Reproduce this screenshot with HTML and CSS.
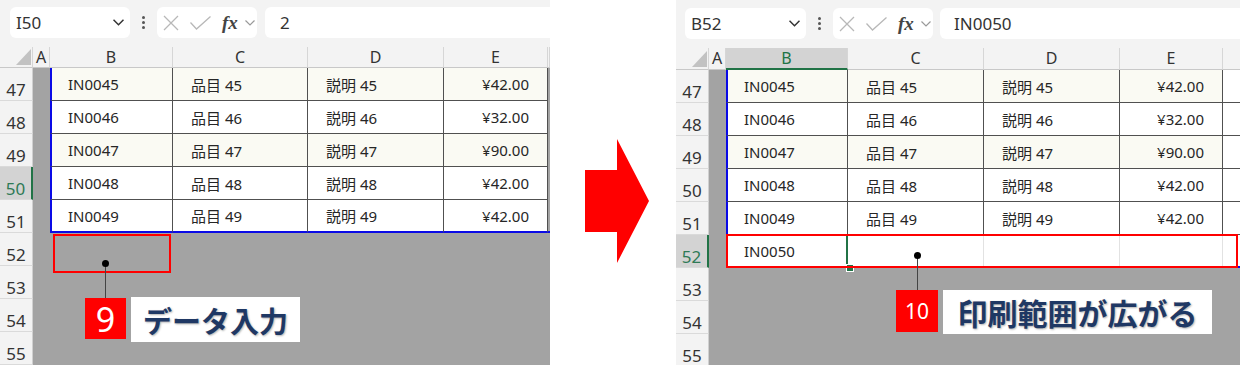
FILE: index.html
```html
<!DOCTYPE html>
<html lang="ja">
<head>
  <meta charset="UTF-8">
  <title>印刷範囲が広がる</title>
  <link rel="stylesheet" href="styles.css">
</head>
<body>
  <div class="stage">

    <section class="panel panel-before">
      <div class="toolbar">
        <div class="namebox">
          <span>I50</span>
          <svg class="caret" width="11" height="7" viewBox="0 0 11 7"><polyline points="0.5,0.8 5.5,5.8 10.5,0.8"/></svg>
        </div>
        <div class="kebab"><i></i><i></i><i></i></div>
        <div class="fx-group">
          <svg class="ico-x" width="16" height="16" viewBox="0 0 16 16"><path d="M1 1 L15 15 M15 1 L1 15"/></svg>
          <svg class="ico-ok" width="21" height="14" viewBox="0 0 21 14"><polyline points="0.5,6.5 6.5,13 20.5,0.5"/></svg>
          <span class="fx">fx</span>
          <svg class="caret-sm" width="10" height="6" viewBox="0 0 10 6"><polyline points="0.5,0.5 5,5 9.5,0.5"/></svg>
        </div>
        <div class="formula">2</div>
      </div>

      <div class="sheet">
        <div class="corner"><div class="tri"></div></div>
        <div class="hdr">A</div><div class="hdr">B</div><div class="hdr">C</div><div class="hdr">D</div><div class="hdr">E</div><div class="hdr"></div>

        <div class="rh">47</div><div class="pad"></div>
        <div class="cell lead alt">IN0045</div><div class="cell alt">品目 45</div><div class="cell alt">説明 45</div><div class="cell money alt">¥42.00</div><div class="pad"></div>

        <div class="rh">48</div><div class="pad"></div>
        <div class="cell lead">IN0046</div><div class="cell">品目 46</div><div class="cell">説明 46</div><div class="cell money">¥32.00</div><div class="pad"></div>

        <div class="rh">49</div><div class="pad"></div>
        <div class="cell lead alt">IN0047</div><div class="cell alt">品目 47</div><div class="cell alt">説明 47</div><div class="cell money alt">¥90.00</div><div class="pad"></div>

        <div class="rh sel">50</div><div class="pad"></div>
        <div class="cell lead">IN0048</div><div class="cell">品目 48</div><div class="cell">説明 48</div><div class="cell money">¥42.00</div><div class="pad"></div>

        <div class="rh">51</div><div class="pad"></div>
        <div class="cell lead edge">IN0049</div><div class="cell edge">品目 49</div><div class="cell edge">説明 49</div><div class="cell money edge">¥42.00</div><div class="pad edge"></div>

        <div class="rh">52</div><div class="void"></div>
        <div class="rh">53</div><div class="void"></div>
        <div class="rh">54</div><div class="void"></div>
        <div class="rh">55</div><div class="void"></div>
      </div>

      <div class="mark mark-before"></div>
      <div class="leader leader-before"></div>
      <div class="callout callout-before">
        <div class="badge badge-big">9</div>
        <div class="label">データ入力</div>
      </div>
    </section>

    <div class="arrow">
      <svg width="64" height="124" viewBox="0 0 64 124"><polygon points="0,31 32,31 32,0 64,62 32,124 32,93 0,93"/></svg>
    </div>

    <section class="panel panel-after">
      <div class="toolbar">
        <div class="namebox">
          <span>B52</span>
          <svg class="caret" width="11" height="7" viewBox="0 0 11 7"><polyline points="0.5,0.8 5.5,5.8 10.5,0.8"/></svg>
        </div>
        <div class="kebab"><i></i><i></i><i></i></div>
        <div class="fx-group">
          <svg class="ico-x" width="16" height="16" viewBox="0 0 16 16"><path d="M1 1 L15 15 M15 1 L1 15"/></svg>
          <svg class="ico-ok" width="21" height="14" viewBox="0 0 21 14"><polyline points="0.5,6.5 6.5,13 20.5,0.5"/></svg>
          <span class="fx">fx</span>
          <svg class="caret-sm" width="10" height="6" viewBox="0 0 10 6"><polyline points="0.5,0.5 5,5 9.5,0.5"/></svg>
        </div>
        <div class="formula">IN0050</div>
      </div>

      <div class="sheet">
        <div class="corner"><div class="tri"></div></div>
        <div class="hdr">A</div><div class="hdr sel">B</div><div class="hdr">C</div><div class="hdr">D</div><div class="hdr">E</div><div class="hdr"></div>

        <div class="rh">47</div><div class="pad"></div>
        <div class="cell lead alt">IN0045</div><div class="cell alt">品目 45</div><div class="cell alt">説明 45</div><div class="cell money alt">¥42.00</div><div class="cell spare"></div>

        <div class="rh">48</div><div class="pad"></div>
        <div class="cell lead">IN0046</div><div class="cell">品目 46</div><div class="cell">説明 46</div><div class="cell money">¥32.00</div><div class="cell spare"></div>

        <div class="rh">49</div><div class="pad"></div>
        <div class="cell lead alt">IN0047</div><div class="cell alt">品目 47</div><div class="cell alt">説明 47</div><div class="cell money alt">¥90.00</div><div class="cell spare"></div>

        <div class="rh">50</div><div class="pad"></div>
        <div class="cell lead">IN0048</div><div class="cell">品目 48</div><div class="cell">説明 48</div><div class="cell money">¥42.00</div><div class="cell spare"></div>

        <div class="rh">51</div><div class="pad"></div>
        <div class="cell lead">IN0049</div><div class="cell">品目 49</div><div class="cell">説明 49</div><div class="cell money">¥42.00</div><div class="cell spare"></div>

        <div class="rh sel">52</div><div class="pad"></div>
        <div class="cell lead edge active">IN0050</div><div class="cell open edge"></div><div class="cell open edge"></div><div class="cell open edge"></div><div class="cell spare open edge"></div>

        <div class="rh">53</div><div class="void"></div>
        <div class="rh">54</div><div class="void"></div>
        <div class="rh">55</div><div class="void"></div>
      </div>

      <div class="handle"></div>
      <div class="mark mark-after"></div>
      <div class="leader leader-after"></div>
      <div class="callout callout-after">
        <div class="badge">10</div>
        <div class="label">印刷範囲が広がる</div>
      </div>
    </section>

  </div>
</body>
</html>
```

FILE: styles.css
```css
body {
  margin: 0;
  background-color: #ffffff;
  font-family: "Noto Sans", "Noto Sans CJK JP", sans-serif;
  color: #262626;
}
.stage {
  display: flex;
  height: 365px;
  overflow: hidden;
}

/* panels */
.panel {
  position: relative;
  width: 550px;
  height: 365px;
  overflow: hidden;
  background-color: #a3a3a3;
  flex-shrink: 0;
}
.panel-after {
  width: 564px;
}

/* formula bar */
.toolbar {
  height: 47px;
  box-sizing: border-box;
  padding: 7px 0 0 10px;
  background-color: #f3f3f3;
  display: flex;
  align-items: flex-start;
}
.panel-after .toolbar {
  height: 48px;
  padding: 8px 0 0 9px;
}
.namebox {
  width: 120px;
  height: 31px;
  box-sizing: border-box;
  padding: 0 6px;
  background-color: #ffffff;
  border-radius: 6px;
  display: flex;
  align-items: center;
  justify-content: space-between;
  font-size: 17px;
  color: #333333;
}
.panel-after .namebox {
  width: 121px;
}
.caret polyline {
  fill: none;
  stroke: #333333;
  stroke-width: 1.5;
}
.kebab {
  width: 27px;
  height: 31px;
  display: flex;
  flex-direction: column;
  align-items: center;
  justify-content: center;
  gap: 2px;
}
.kebab i {
  width: 3px;
  height: 3px;
  border-radius: 50%;
  background-color: #555555;
}
.fx-group {
  width: 100px;
  height: 31px;
  box-sizing: border-box;
  padding-left: 6px;
  background-color: #ffffff;
  border-radius: 6px;
  display: flex;
  align-items: center;
}
.ico-x path,
.ico-ok polyline {
  fill: none;
  stroke: #b8b8b8;
  stroke-width: 1.3;
}
.ico-ok {
  margin-left: 11px;
}
.fx {
  margin-left: 11px;
  font-family: "Liberation Serif", serif;
  font-style: italic;
  font-weight: bold;
  font-size: 19px;
  color: #444444;
}
.caret-sm {
  margin-left: 7px;
}
.caret-sm polyline {
  fill: none;
  stroke: #9a9a9a;
  stroke-width: 1.2;
}
.formula {
  flex: 1;
  height: 31px;
  margin-left: 8px;
  padding-left: 15px;
  background-color: #ffffff;
  border-radius: 6px 0 0 6px;
  display: flex;
  align-items: center;
  font-size: 17px;
  color: #333333;
}
.panel-after .formula {
  margin-left: 7px;
  padding-left: 14px;
}

/* grid */
.sheet {
  display: grid;
  grid-template-columns: 33px 17px 123px 135px 136px 104px 1fr;
  grid-template-rows: 21px;
  grid-auto-rows: 33px;
}
.panel-after .sheet {
  grid-template-columns: 33px 17px 122px 136px 136px 103px 1fr;
  grid-template-rows: 22px;
}
.corner {
  background-color: #f3f3f3;
  border-bottom: 1px solid #c8c8c8;
  border-right: 1px solid #d6d6d6;
  display: flex;
  align-items: flex-end;
  justify-content: flex-end;
  padding: 0 1px 2px 0;
}
.tri {
  width: 15px;
  height: 16px;
  background-color: #c2c2c2;
  clip-path: polygon(100% 0, 100% 100%, 0 100%);
}
.hdr {
  background-color: #f3f3f3;
  border-right: 1px solid #d6d6d6;
  border-bottom: 1px solid #c8c8c8;
  font-size: 16px;
  line-height: 21px;
  text-align: center;
  color: #333333;
}
.hdr.sel {
  background-color: #d3d3d3;
  color: #217346;
  border-bottom: 2px solid #217346;
}
.rh {
  background-color: #f3f3f3;
  border-bottom: 1px solid #dadada;
  border-right: 1px solid #d0d0d0;
  display: flex;
  align-items: flex-end;
  justify-content: center;
  padding-bottom: 2px;
  font-size: 17px;
  line-height: 17px;
  color: #333333;
}
.rh.sel {
  background-color: #d3d3d3;
  color: #2f7a56;
  border-right: 2px solid #217346;
}
.cell {
  background-color: #ffffff;
  border-right: 1px solid #505050;
  border-bottom: 1px solid #505050;
  padding-left: 18px;
  display: flex;
  align-items: center;
  font-size: 15px;
  color: #262626;
  white-space: nowrap;
}
.cell.alt {
  background-color: #fafaf3;
}
.cell.lead {
  border-left: 2px solid #0a0ae6;
  padding-left: 16px;
}
.cell.money {
  justify-content: flex-end;
  padding: 0 18px 0 0;
}
.cell.spare {
  border-right: none;
}
.cell.open {
  border-right: 1px solid #e2e2e2;
}
.cell.active {
  border-right: 2px solid #217346;
}
.edge {
  border-bottom: 2px solid #0a0ae6;
}
.void {
  grid-column: 2 / -1;
}

/* annotations */
.mark {
  position: absolute;
  border: 2px solid #ff0000;
  box-sizing: border-box;
}
.mark-before {
  left: 53px;
  top: 234px;
  width: 118px;
  height: 39px;
}
.mark-after {
  left: 50px;
  top: 234px;
  width: 512px;
  height: 34px;
}
.handle {
  position: absolute;
  left: 170px;
  top: 264px;
  width: 6px;
  height: 6px;
  background-color: #217346;
  border: 1px solid #ffffff;
}
.leader {
  position: absolute;
  width: 1px;
  background-color: #444444;
}
.leader::before {
  content: "";
  position: absolute;
  left: -3px;
  top: -3px;
  width: 7px;
  height: 7px;
  border-radius: 50%;
  background-color: #000000;
}
.leader-before {
  left: 105px;
  top: 263px;
  height: 35px;
}
.leader-after {
  left: 241px;
  top: 255px;
  height: 35px;
}
.callout {
  position: absolute;
  display: flex;
  align-items: flex-start;
  gap: 5px;
}
.callout-before {
  left: 85px;
  top: 297px;
}
.callout-after {
  left: 220px;
  top: 290px;
}
.badge {
  width: 42px;
  height: 42px;
  background-color: #ff0000;
  color: #ffffff;
  display: flex;
  align-items: center;
  justify-content: center;
  font-size: 21px;
}
.badge-big {
  width: 41px;
  height: 41px;
  margin-top: 1px;
  font-size: 34px;
}
.label {
  height: 44px;
  box-sizing: border-box;
  background-color: #ffffff;
  display: flex;
  align-items: center;
  justify-content: center;
  white-space: nowrap;
  font-family: "Noto Sans CJK JP", sans-serif;
  font-weight: bold;
  font-size: 29px;
  color: #1f3864;
  text-shadow: 1px 1px 2px rgba(0, 0, 0, 0.3);
}
.callout-before .label {
  width: 169px;
  height: 45px;
}
.callout-after .label {
  width: 269px;
  font-size: 30px;
}

/* arrow between panels */
.arrow {
  width: 126px;
  flex-shrink: 0;
  box-sizing: border-box;
  padding: 139px 0 0 35px;
}
.arrow polygon {
  fill: #ff0000;
}
```
